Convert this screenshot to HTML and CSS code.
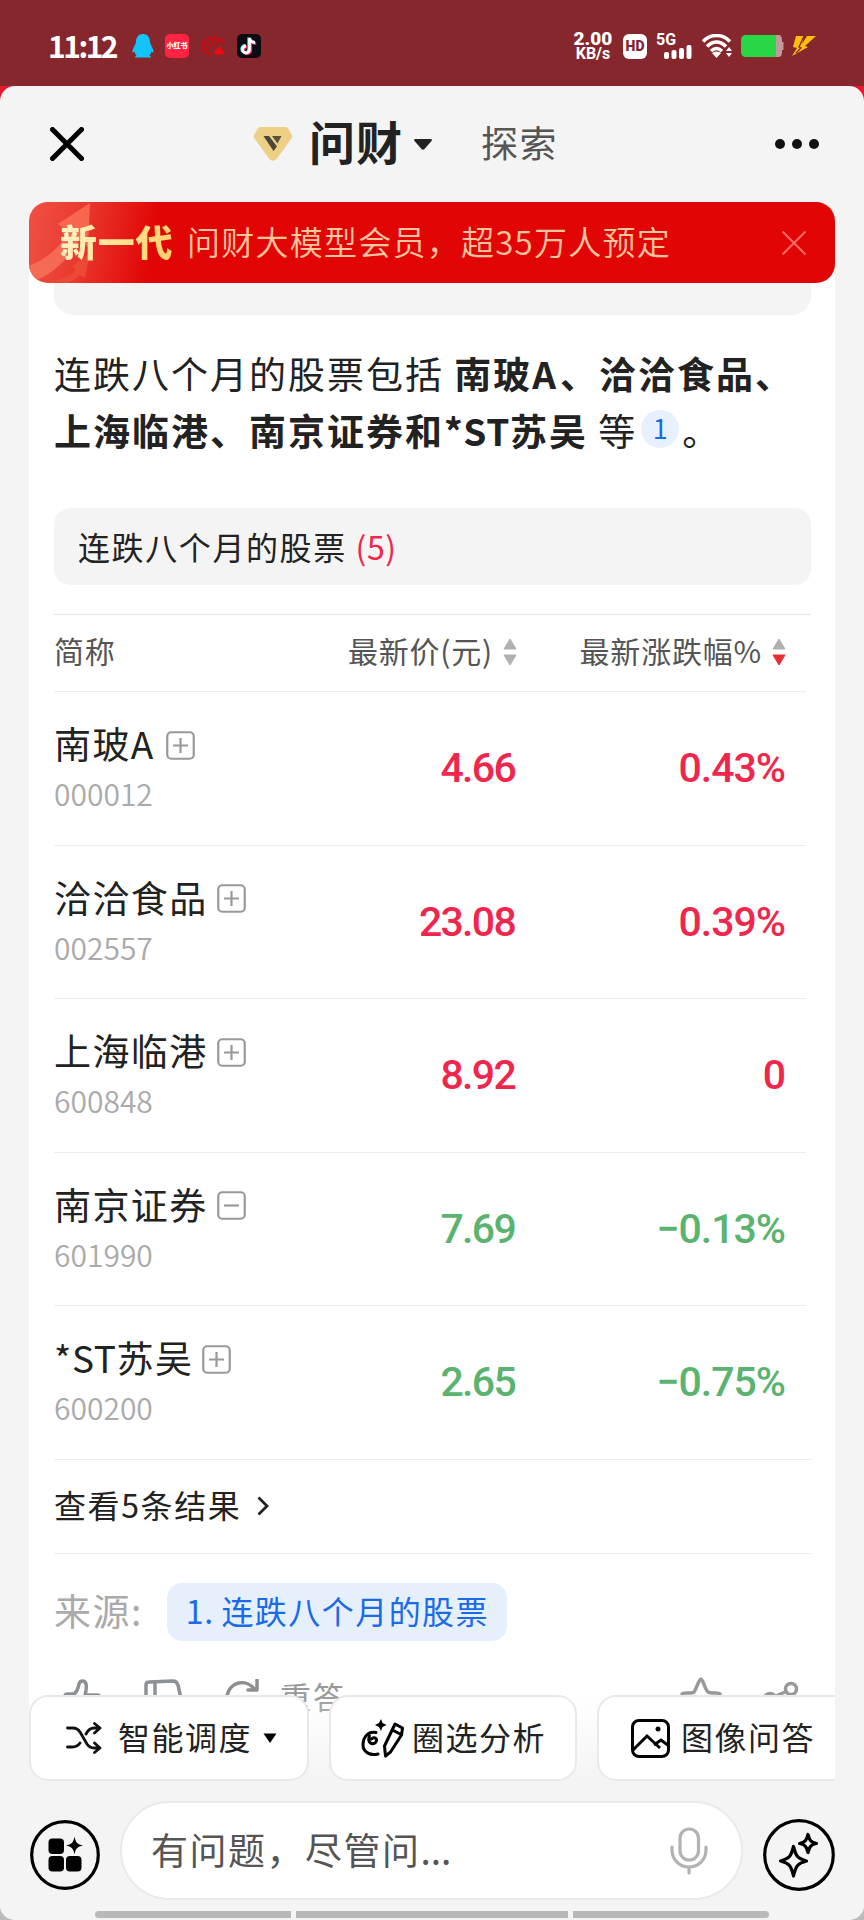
FILE: index.html
```
<!DOCTYPE html>
<html lang="zh-CN">
<head>
    <meta charset="UTF-8">
    <meta name="viewport" content="width=device-width, initial-scale=1.0">
    <title>问财</title>
    <link rel="stylesheet" href="styles.css">
</head>
<body>
    <div class="status-bar">
        <span class="time">11:12</span>
        <svg class="app-icon" width="24" height="26" viewBox="0 0 24 26">
            <path d="M12 1C7.500 1 5 4.500 5 9c0 2-3 5.500-3.500 9-.3 2 .8 2 2 .5.500 2 1.200 3 2 4-1 .6-1.700 1.200-1.500 2h16c.2-.8-.5-1.400-1.500-2 .8-1 1.500-2 2-4 1.200 1.500 2.300 1.500 2-.5C22 14.500 19 11 19 9c0-4.500-2.500-8-7-8z" fill="#12c4fb"/>
        </svg>
        <span class="app-icon xhs">小红书</span>
        <svg class="app-icon" width="24" height="24" viewBox="0 0 24 24">
            <g fill="none" stroke="#c80a12" stroke-width="2.600">
                <path d="M2 18C0 10 5 4 12 4c5 0 9 2 10 6"/>
                <path d="M2 14l6 1M5 8l5 5M11 5l1 6M18 5l-3 6M3 18l7 3" stroke-width="2"/>
            </g>
            <path d="M18 12l5 6c0 3-3 3.500-5 2-2 1.500-5 1-5-2z" fill="#f00a10"/>
        </svg>
        <svg class="app-icon" width="24" height="24" viewBox="0 0 24 24">
            <rect width="24" height="24" rx="5" fill="#0b0b14"/>
            <g fill="none" stroke-width="2.800">
                <path d="M12.500 4v11.500a3.500 3.500 0 1 1-3.500-3.500M12.500 4c.5 3 2.500 4.500 5.500 4.500" stroke="#25f4ee" transform="translate(-.8 -.6)"/>
                <path d="M12.500 4v11.500a3.500 3.500 0 1 1-3.500-3.500M12.500 4c.5 3 2.500 4.500 5.500 4.500" stroke="#fe2c55" transform="translate(1.200 .9)"/>
                <path d="M12.500 4v11.500a3.500 3.500 0 1 1-3.500-3.500M12.500 4c.5 3 2.500 4.500 5.500 4.500" stroke="#fff"/>
            </g>
        </svg>
        <div class="status-right">
            <div class="speed"><b>2.00</b><span>KB/s</span></div>
            <span class="hd">HD</span>
            <div class="signal">
                <span>5G</span>
                <svg width="30" height="14" viewBox="0 0 30 14" fill="#fff">
                    <rect x="0" y="7" width="5" height="7" rx="2"/>
                    <rect x="7.500" y="5" width="5" height="9" rx="2"/>
                    <rect x="15" y="3" width="5" height="11" rx="2"/>
                    <rect x="22.500" y="0" width="5" height="14" rx="2"/>
                </svg>
            </div>
            <svg class="wifi" width="30" height="24" viewBox="0 0 30 24">
                <g fill="none" stroke="#fff" stroke-width="3.600">
                    <path d="M1 7.500C9-.5 20-.5 28 7.500"/>
                    <path d="M5 12.500c6-6 13-6 19 0"/>
                    <path d="M9 17c4-3.500 7-3.500 11 0"/>
                </g>
                <path d="M10 19c3-2 6-2 9 0l-4.500 5z" fill="#fff"/>
                <path d="M24 17l3-4 3 4zM24 19l3 4 3-4z" fill="#fff"/>
            </svg>
            <svg class="battery" width="43" height="22" viewBox="0 0 43 22">
                <path d="M35 0h2c3 0 4 2 4 5v2h1.500v8H41v2c0 3-1 5-4 5h-2z" fill="#c19a9d"/>
                <path d="M5 0h30v22H5c-3 0-5-2-5-5V5c0-3 2-5 5-5z" fill="#28d745"/>
            </svg>
            <svg width="24" height="21" viewBox="0 0 24 21">
                <path d="M4 0h8l-2 8 5-8h9L13 10l3 1L0 20l5-8-4-1z" fill="#ffbd0e"/>
                <path d="M12 0L7 11l2 1-5 5" fill="none" stroke="#85272c" stroke-width="1.300"/>
            </svg>
        </div>
    </div>

    <div class="backdrop">
        <div class="sheet">
            <div class="header">
                <svg class="close" width="34" height="34" viewBox="0 0 34 34">
                    <path d="M2.500 2.500l29 29M31.500 2.500l-29 29" stroke="#000" stroke-width="5" stroke-linecap="round"/>
                </svg>
                <div class="tabs">
                    <svg class="vip" width="40" height="34" viewBox="0 0 40 34">
                        <path d="M8 0h24c1.500 0 2.500.6 3.300 1.700l3.500 6c.8 1.300.7 2.500-.3 3.800L24 31.500c-2.500 3-5.500 3-8 0L1.500 11.500c-1-1.300-1.100-2.500-.3-3.800l3.500-6C5.500.6 6.500 0 8 0z" fill="#ecd086"/>
                        <path d="M10.500 9h5.500l8 10.500-3.500 4.500z" fill="#4b463a"/>
                        <path d="M19 9h9.500l-4 7.500z" fill="#5b523c"/>
                    </svg>
                    <span class="tab active">问财</span>
                    <svg class="caret" width="18" height="11" viewBox="0 0 18 11">
                        <path d="M1.500 0h15c1.200 0 1.800 1 1 2l-7 8c-1 1-2 1-3 0l-7-8c-.8-1-.2-2 1-2z" fill="#222"/>
                    </svg>
                    <span class="tab">探索</span>
                </div>
                <svg class="more" width="44" height="10" viewBox="0 0 44 10" fill="#111">
                    <circle cx="5" cy="5" r="5"/><circle cx="22" cy="5" r="5"/><circle cx="39" cy="5" r="5"/>
                </svg>
            </div>

            <div class="banner">
                <svg class="banner-art" width="100" height="81" viewBox="0 0 100 81">
                    <defs>
                        <linearGradient id="arrow" x1="0" y1="1" x2="1" y2="0">
                            <stop offset="0" stop-color="#f4705a"/>
                            <stop offset="1" stop-color="#fb6a50"/>
                        </linearGradient>
                    </defs>
                    <path d="M0 64C18 57 32 44 39 30l-10-8L61 1l-2 44-9-7C38 60 20 74 5 79L0 70z" fill="url(#arrow)" opacity=".9"/>
                    <path d="M24 80c10-3 18-7 23-12l-4-4 18-13-5 25-5-3c-5 4-9 6-13 8z" fill="#ef4b38" opacity=".85"/>
                </svg>
                <span class="banner-tag">新一代</span>
                <span class="banner-text">问财大模型会员，超35万人预定</span>
                <svg class="banner-close" width="26" height="26" viewBox="0 0 26 26">
                    <path d="M1.500 1.500l23 23M24.500 1.500l-23 23" stroke="#fa6d66" stroke-width="2"/>
                </svg>
            </div>

            <div class="answer">
                <div class="bubble-end"></div>
                <p class="summary">连跌八个月的股票包括 <b>南玻<span class="wide">A</span>、洽洽食品、<br>上海临港、南京证券和<span class="tight">*ST</span>苏吴</b> 等<span class="ref">1</span>。</p>
                <div class="title">连跌八个月的股票 <span class="count">(5)</span></div>

                <div class="table">
                    <div class="row head">
                        <span>简称</span>
                        <span class="num">最新价(元)
                            <svg width="14" height="28" viewBox="0 0 14 28"><path d="M7 1l6 10H1z" fill="#b0b0b0" stroke="#b0b0b0" stroke-linejoin="round"/><path d="M7 27l6-10H1z" fill="#b0b0b0" stroke="#b0b0b0" stroke-linejoin="round"/></svg>
                        </span>
                        <span class="num">最新涨跌幅%
                            <svg width="14" height="28" viewBox="0 0 14 28"><path d="M7 1l6 10H1z" fill="#b0b0b0" stroke="#b0b0b0" stroke-linejoin="round"/><path d="M7 27l6-10H1z" fill="#e62e32" stroke="#e62e32" stroke-linejoin="round"/></svg>
                        </span>
                    </div>
                    <div class="row up">
                        <div class="stock">
                            <div class="name"><span>南玻<span class="wide">A</span></span><svg width="29" height="29" viewBox="0 0 29 29"><rect x="1.250" y="1.250" width="26.500" height="26.500" rx="4"/><path d="M7 14.500h15M14.500 7v15"/></svg></div>
                            <div class="code">000012</div>
                        </div>
                        <span class="value">4.66</span>
                        <span class="value percent">0.43%</span>
                    </div>
                    <div class="row up">
                        <div class="stock">
                            <div class="name">洽洽食品<svg width="29" height="29" viewBox="0 0 29 29"><rect x="1.250" y="1.250" width="26.500" height="26.500" rx="4"/><path d="M7 14.500h15M14.500 7v15"/></svg></div>
                            <div class="code">002557</div>
                        </div>
                        <span class="value">23.08</span>
                        <span class="value percent">0.39%</span>
                    </div>
                    <div class="row up">
                        <div class="stock">
                            <div class="name">上海临港<svg width="29" height="29" viewBox="0 0 29 29"><rect x="1.250" y="1.250" width="26.500" height="26.500" rx="4"/><path d="M7 14.500h15M14.500 7v15"/></svg></div>
                            <div class="code">600848</div>
                        </div>
                        <span class="value">8.92</span>
                        <span class="value percent">0</span>
                    </div>
                    <div class="row down">
                        <div class="stock">
                            <div class="name">南京证券<svg width="29" height="29" viewBox="0 0 29 29"><rect x="1.250" y="1.250" width="26.500" height="26.500" rx="4"/><path d="M7 14.500h15"/></svg></div>
                            <div class="code">601990</div>
                        </div>
                        <span class="value">7.69</span>
                        <span class="value percent">−0.13%</span>
                    </div>
                    <div class="row down">
                        <div class="stock">
                            <div class="name"><span><span class="tight">*ST</span>苏吴</span><svg width="29" height="29" viewBox="0 0 29 29"><rect x="1.250" y="1.250" width="26.500" height="26.500" rx="4"/><path d="M7 14.500h15M14.500 7v15"/></svg></div>
                            <div class="code">600200</div>
                        </div>
                        <span class="value">2.65</span>
                        <span class="value percent">−0.75%</span>
                    </div>
                </div>

                <div class="view-all">查看5条结果
                    <svg width="12" height="20" viewBox="0 0 12 20"><path d="M1.500 1.500L10 10l-8.500 8.500" fill="none" stroke="#222" stroke-width="2.800"/></svg>
                </div>
                <div class="source">
                    <span>来源:</span>
                    <span class="source-link"><span class="tight">1. </span>连跌八个月的股票</span>
                </div>
                <div class="actions">
                    <svg width="40" height="36" viewBox="0 0 40 36" stroke="#8d9197">
                        <path d="M2 17c0-2 1-2 3-2h6c4-3 4-6 5-10 1-4 6-4 7 0 1 4 0 7-1 11h12c2 0 3 1 3 3l-3 15H2z"/>
                    </svg>
                    <svg width="40" height="36" viewBox="0 0 40 36" stroke="#8d9197">
                        <path d="M2 24V6c0-2 1-3 3-3l24-1c3 0 4 1 5 4l4 18H24M11 3v21"/>
                    </svg>
                    <svg width="36" height="36" viewBox="0 0 36 36" stroke="#8e8e8e">
                        <path d="M2 18C4 2 22-1 30 11M32 1v10H23"/>
                    </svg>
                    <span>重答</span>
                    <svg class="star" width="42" height="40" viewBox="0 0 42 40" stroke="#999">
                        <path d="M21 2c2 0 4 11 7 13s12 0 12 2-9 8-9 11 3 10 1 10-9-4-11-4-9 4-11 4 1-7 1-10-9-9-9-11 10 0 12-2 5-13 7-13z"/>
                    </svg>
                    <svg width="36" height="36" viewBox="0 0 36 36" stroke="#999">
                        <circle cx="28" cy="10" r="5.500"/><circle cx="7" cy="20" r="5.500"/><circle cx="28" cy="30" r="5.500"/><path d="M12 17.500l11-5M12 23l11 5"/>
                    </svg>
                </div>
            </div>

            <div class="dock">
                <div class="tools">
                    <div class="tool">
                        <svg width="36" height="32" viewBox="0 0 36 32" fill="none" stroke="#111" stroke-width="2.800" stroke-linecap="round" stroke-linejoin="round">
                            <path d="M1.500 6H7c3 0 5 1 7 4l7 12c2 3 4 4 7 4h5M1.500 25H6c4 0 6-1 8-4M20 12c2-4 4-6 8-6h5M28.500 1.500L34 6l-5.500 5M28.500 21L34 26l-5.500 4.500"/>
                        </svg>
                        <span>智能调度</span>
                        <svg class="tool-caret" width="14" height="10" viewBox="0 0 14 10"><path d="M.5.500h13L7 10z" fill="#000"/></svg>
                    </div>
                    <div class="tool lasso">
                        <svg width="44" height="39" viewBox="0 0 44 39" fill="none" stroke="#000" stroke-width="3" stroke-linecap="round" stroke-linejoin="round">
                            <path d="M15 13.500C7 12 2 18 2 26c0 7 7 11 15 9M8.500 17c-2.500 6 2 9.500 6 6.500 3-3-1-7-4-3.500"/>
                            <path d="M34 5l7.500 4-1 7-11 17-5 4-1-10zM31.500 11l8.500 4.500"/>
                            <path d="M20 0l1.500 4 4 2-4 2-1.500 4-2-4-4-2 4-2z" fill="#000" stroke="none"/>
                        </svg>
                        <span>圈选分析</span>
                    </div>
                    <div class="tool image">
                        <svg width="39" height="39" viewBox="0 0 39 39" fill="none" stroke="#000" stroke-width="3">
                            <rect x="1.500" y="1.500" width="36" height="36" rx="6.500"/>
                            <path d="M2 31l14-14 13 12M23 26l7-5 8 6"/>
                            <circle cx="27" cy="10" r="2.500" fill="#000" stroke="none"/>
                        </svg>
                        <span>图像问答</span>
                    </div>
                </div>
                <div class="input-bar">
                    <svg class="round" width="70" height="70" viewBox="0 0 70 70">
                        <circle cx="35" cy="35" r="33.300" fill="none" stroke="#000" stroke-width="3.200"/>
                        <rect x="18.500" y="18.500" width="15.500" height="15.500" rx="4"/>
                        <rect x="18.500" y="36" width="15.500" height="15.500" rx="4"/>
                        <rect x="36" y="36" width="15.500" height="15.500" rx="4"/>
                        <path d="M44.500 16.500c1 6 3 8 8.500 9-5.500 1-7.500 3-8.500 9-1-6-3-8-8.500-9 5.500-1 7.500-3 8.500-9z"/>
                    </svg>
                    <div class="ask">
                        <span>有问题，尽管问<span class="dots">...</span></span>
                        <svg width="38" height="48" viewBox="0 0 38 48" fill="none" stroke="#b2b2b2" stroke-width="3.200" stroke-linecap="round">
                            <rect x="10" y="2" width="18.500" height="31" rx="9.250"/>
                            <path d="M2 20v3c0 9 7 17 17 17s17-8 17-17v-3M19 40v6"/>
                        </svg>
                    </div>
                    <svg class="round" width="72" height="72" viewBox="0 0 72 72" fill="none" stroke="#000" stroke-width="3.200" stroke-linejoin="round">
                        <circle cx="36" cy="36" r="34.300"/>
                        <path d="M30.500 27.500c2.500 10 4 12 13 14.500-9 2.500-10.500 4.500-13 15-2.500-10.500-4-12.500-13-15 9-2.500 10.500-4.500 13-14.500z"/>
                        <path d="M45 15.500c1.500 6 3 8 8.500 9-5.500 1-7 3-8.500 9-1.500-6-3-8-8.500-9 5.500-1 7-3 8.500-9z"/>
                    </svg>
                </div>
                <div class="nav-bar"><i></i><i></i><i></i></div>
            </div>
        </div>
    </div>
</body>
</html>
```
FILE: styles.css
```
* {
    box-sizing: border-box;
}
body {
    margin: 0;
    height: 1920px;
    overflow: hidden;
    display: flex;
    flex-direction: column;
    font-family: "Noto Sans CJK SC", sans-serif;
    color: #222;
    background-color: #85272c;
}
svg {
    display: block;
    flex: none;
}

/* status bar */
.status-bar {
    height: 86px;
    padding: 6px 48px 0;
    display: flex;
    align-items: center;
    color: #fff;
}
.time {
    width: 83px;
    margin-top: -3px;
    font-size: 30px;
    font-weight: 700;
    letter-spacing: -2.500px;
    white-space: nowrap;
}
.app-icon {
    margin-right: 12px;
}
.app-icon:first-of-type {
    margin-right: 10px;
}
.xhs {
    width: 24px;
    height: 24px;
    border-radius: 5px;
    background-color: #ff2442;
    font-size: 7px;
    font-weight: 900;
    line-height: 23px;
    text-align: center;
    white-space: nowrap;
}
.status-right {
    margin-left: auto;
    display: flex;
    align-items: center;
}
.speed {
    display: flex;
    flex-direction: column;
    align-items: center;
    width: 40px;
    margin: -1px 10px 0 0;
    font-family: Roboto, sans-serif;
    font-weight: 700;
    white-space: nowrap;
}
.speed b {
    font-size: 19px;
    line-height: 15px;
}
.speed span {
    font-size: 16px;
    line-height: 15px;
}
.hd {
    width: 24px;
    height: 25px;
    border-radius: 6px;
    background-color: #fff;
    color: #85272c;
    font-family: Roboto, sans-serif;
    font-size: 14px;
    font-weight: 900;
    line-height: 25px;
    text-align: center;
    margin-right: 9px;
}
.signal {
    width: 36px;
    margin-right: 10px;
    font-family: Roboto, sans-serif;
    font-size: 16px;
    font-weight: 700;
}
.signal span {
    display: block;
    height: 11px;
    line-height: 11px;
}
.signal svg {
    margin-left: 8px;
}
.wifi {
    margin-right: 9px;
}
.battery {
    margin-right: 8px;
}

/* main sheet */
.backdrop {
    flex: 1;
    min-height: 0;
    background: linear-gradient(#e8192c 0, #e8192c 200px, #bbb 201px);
}
.sheet {
    position: relative;
    height: 100%;
    overflow: hidden;
    border-radius: 15px;
    background-color: #f4f4f4;
}
.header {
    height: 116px;
    padding: 0 45px 0 50px;
    display: flex;
    align-items: center;
}
.tabs {
    display: flex;
    align-items: center;
    margin-left: 169px;
}
.tab {
    margin-top: -5px;
    font-size: 37px;
    letter-spacing: 1.500px;
    line-height: 60px;
    color: #555;
    white-space: nowrap;
}
.tab.active {
    margin: -8px 11px 0 16px;
    width: 94px;
    font-size: 46px;
    font-weight: 700;
    letter-spacing: 1px;
    color: #222;
}
.caret {
    margin-right: 49px;
}
.more {
    margin-left: auto;
}

/* promo banner */
.banner {
    position: relative;
    height: 81px;
    margin: 0 29px;
    padding: 0 28px 0 31px;
    display: flex;
    align-items: center;
    border-radius: 19px;
    overflow: hidden;
    background: linear-gradient(100deg, #f05044 0, #ea3a30 55px, #e10505 130px);
    z-index: 1;
}
.banner-art {
    position: absolute;
    left: 0;
    top: 0;
}
.banner-tag {
    position: relative;
    width: 127px;
    margin-top: -3px;
    font-size: 37px;
    font-weight: 900;
    letter-spacing: .8px;
    color: transparent;
    background: linear-gradient(100deg, #fff2c8, #ffe08c 55%, #ffca5c);
    background-clip: text;
    -webkit-background-clip: text;
}
.banner-text {
    margin-top: -3px;
    font-size: 33px;
    font-weight: 350;
    letter-spacing: 1.250px;
    color: #ffc5a0;
}
.banner-close {
    margin-left: auto;
}

/* answer card */
.answer {
    margin: -28px 29px 0;
    padding: 28px 24px 0 25px;
    height: 1550px;
    background-color: #fff;
}
.bubble-end {
    height: 32px;
    border-radius: 0 0 19px 19px;
    background-color: #f4f4f4;
}
.summary {
    margin: 30px 0 49px;
    font-size: 37px;
    line-height: 57px;
    letter-spacing: 2px;
    white-space: nowrap;
}
.wide {
    letter-spacing: 4px;
}
.tight {
    letter-spacing: .6px;
}
.ref {
    display: inline-block;
    width: 38px;
    height: 38px;
    margin: 0 3px 0 4px;
    border-radius: 50%;
    background-color: #e6f0fe;
    color: #1b6ae6;
    font-size: 27px;
    line-height: 36px;
    letter-spacing: 0;
    text-align: center;
    vertical-align: 7px;
}
.title {
    height: 77px;
    padding-left: 24px;
    border-radius: 16px;
    background-color: #f4f4f4;
    font-size: 32px;
    line-height: 77px;
    letter-spacing: 1.600px;
}
.count {
    color: #f0264d;
    letter-spacing: .5px;
}

.table {
    margin-top: 29px;
    border-top: 1px solid #e6e6e6;
}
.row {
    display: grid;
    grid-template-columns: 230px 231px 1fr;
    align-items: center;
    height: 153.500px;
    margin-right: 5px;
    padding-right: 21px;
    border-bottom: 1px solid #ededed;
}
.row:last-child {
    margin-right: 0;
    padding-right: 26px;
}
.head {
    grid-template-columns: 230px 233px 1fr;
    height: 77px;
    padding: 0 20px 6px 0;
    font-size: 30px;
    letter-spacing: .800px;
    color: #555;
    white-space: nowrap;
}
.num {
    display: flex;
    align-items: center;
    justify-content: flex-end;
    gap: 10px;
}
.num svg {
    margin-top: 3px;
}
.name {
    display: flex;
    align-items: center;
    gap: 9px;
    font-size: 37px;
    line-height: 50px;
    letter-spacing: 1.400px;
    white-space: nowrap;
}
.name svg {
    margin-top: 4px;
    fill: none;
    stroke: #999;
    stroke-width: 2.200;
}
.code {
    font-size: 30px;
    font-weight: 350;
    line-height: 50px;
    letter-spacing: 0;
    color: #aaa;
}
.value {
    font-family: Roboto, sans-serif;
    font-size: 41px;
    font-weight: 500;
    letter-spacing: -1.700px;
    text-align: right;
}
.percent {
    letter-spacing: -1px;
}
.up .value {
    color: #f0264d;
}
.down .value {
    color: #5bb370;
}

.view-all {
    display: flex;
    align-items: center;
    gap: 16px;
    height: 94px;
    padding-bottom: 4px;
    border-bottom: 1px solid #ededed;
    font-size: 32px;
    letter-spacing: 1.600px;
}
.view-all svg {
    margin-top: 3px;
}
.source {
    display: flex;
    align-items: center;
    height: 117px;
    font-size: 37px;
    letter-spacing: 1.500px;
    color: #aaa;
}
.source > span:first-child {
    margin-top: -5px;
}
.source-link {
    height: 58px;
    margin-left: 24px;
    padding: 0 18px 0 19px;
    border-radius: 15px;
    background-color: #e6f0fd;
    color: #1b6ae6;
    font-size: 32px;
    line-height: 55px;
    letter-spacing: 1.450px;
}
.actions {
    display: flex;
    align-items: flex-start;
    padding: 8px 12px 0 9px;
    gap: 41px;
    font-size: 31px;
    line-height: 34px;
    letter-spacing: 2px;
    color: #999;
}
.actions svg {
    fill: none;
    stroke-width: 3.500;
    stroke-linecap: round;
    stroke-linejoin: round;
}
.actions span {
    margin-left: -22px;
}
.actions .star {
    margin-left: auto;
    margin-top: -2px;
}

/* bottom dock, floats over the answer */
.dock {
    position: absolute;
    left: 0;
    right: 0;
    bottom: 0;
    height: 225px;
    background: linear-gradient(rgba(244, 244, 244, 0) 0, #f4f4f4 85px);
}
.tools {
    display: flex;
    gap: 20px;
    margin: 0 29px;
    height: 86px;
    overflow: hidden;
}
.tool {
    flex: none;
    display: flex;
    align-items: center;
    width: 280px;
    padding-left: 35px;
    border: 2px solid #e9e9e9;
    border-radius: 19px;
    background-color: #fff;
    font-size: 32px;
    letter-spacing: 1.500px;
    white-space: nowrap;
}
.tool span {
    margin: -4px 0 0 16px;
}
.tool-caret {
    margin-left: 11px;
}
.tool.lasso {
    width: 248px;
    padding-left: 30px;
}
.tool.lasso span {
    margin-left: 7px;
}
.tool.image {
    width: 262px;
    padding-left: 32px;
}
.tool.image span {
    margin-left: 11px;
}
.input-bar {
    display: flex;
    align-items: center;
    justify-content: space-between;
    margin-top: 20px;
    padding: 0 29px 0 30px;
}
.round {
    margin-top: 8px;
}
.ask {
    display: flex;
    align-items: center;
    justify-content: space-between;
    width: 623px;
    height: 99px;
    padding: 0 33px 0 29px;
    border: 2px solid #eaeaea;
    border-radius: 50px;
    background-color: #fff;
    font-size: 37px;
    letter-spacing: 1.500px;
    color: #555;
}
.ask > span {
    margin-top: -4px;
}
.dots {
    letter-spacing: 0;
}
.nav-bar {
    display: flex;
    gap: 5px;
    margin: 11px 95px 0;
}
.nav-bar i {
    flex: 196;
    height: 7px;
    border-radius: 4px 0 0 4px;
    background-color: #b9b9b9;
}
.nav-bar i:nth-child(2) {
    flex: 271;
    border-radius: 0;
}
.nav-bar i:last-child {
    border-radius: 0 4px 4px 0;
}
```
